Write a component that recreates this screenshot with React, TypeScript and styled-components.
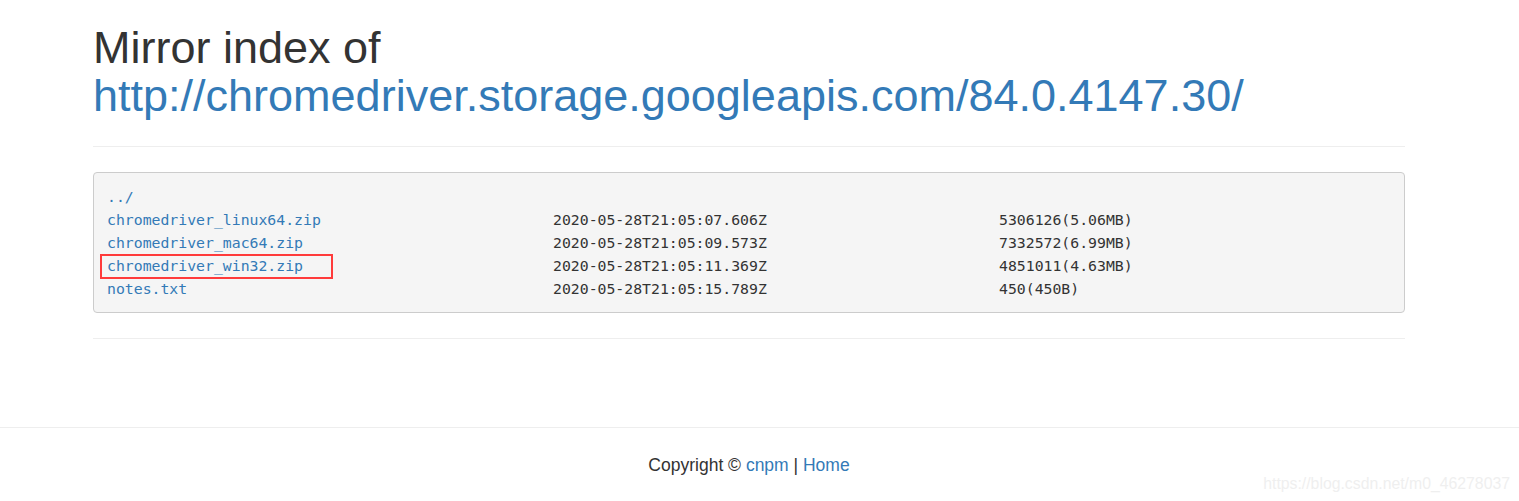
import React from "react";
import styled, { createGlobalStyle } from "styled-components";

const GlobalStyle = createGlobalStyle`
  html, body {
    margin: 0;
    padding: 0;
    background: #fff;
    color: #333;
    font-family: "Liberation Sans", Arial, sans-serif;
  }
  a {
    color: #337ab7;
    text-decoration: none;
  }
`;

const Page = styled.div`
  position: relative;
  min-height: 501px;
  overflow: hidden;
`;

const Container = styled.div`
  width: 1312px;
  margin-left: 93px;
`;

const PageHeader = styled.div`
  padding-bottom: 26px;
  border-bottom: 1px solid #eee;
`;

const Title = styled.h1`
  margin: 24px 0 0;
  font-size: 45px;
  line-height: 48px;
  font-weight: 400;
  color: #333;
`;

const Listing = styled.div`
  position: relative;
  margin: 25px 0;
  padding: 12px 13px;
  background: #f5f5f5;
  border: 1px solid #ccc;
  border-radius: 4px;
  font-family: "DejaVu Sans Mono", "Liberation Mono", monospace;
  font-size: 14.8px;
  line-height: 23px;
  color: #333;
`;

const Row = styled.div<{ $marked?: boolean }>`
  position: relative;
  display: grid;
  grid-template-columns: 446px 446px 1fr;
  height: 23px;
  white-space: pre;

  ${(p) =>
    p.$marked &&
    `
    &::after {
      content: "";
      position: absolute;
      left: -7px;
      top: 0;
      width: 229px;
      height: 21px;
      border: 2px solid #ff3b3b;
    }
  `}
`;

const Divider = styled.div`
  border-top: 1px solid #eee;
`;

const Footer = styled.footer`
  margin-top: 88px;
  border-top: 1px solid #eee;
  padding-top: 25px;
`;

const FooterText = styled.div`
  width: 1312px;
  margin-left: 93px;
  text-align: center;
  font-size: 17.5px;
  line-height: 25px;
  color: #333;
`;

const Watermark = styled.div`
  position: absolute;
  right: 9px;
  bottom: 7px;
  font-size: 15.8px;
  line-height: 20px;
  color: #efefef;
`;

const files = [
  { name: "chromedriver_linux64.zip", date: "2020-05-28T21:05:07.606Z", size: "5306126(5.06MB)" },
  { name: "chromedriver_mac64.zip", date: "2020-05-28T21:05:09.573Z", size: "7332572(6.99MB)" },
  { name: "chromedriver_win32.zip", date: "2020-05-28T21:05:11.369Z", size: "4851011(4.63MB)", marked: true },
  { name: "notes.txt", date: "2020-05-28T21:05:15.789Z", size: "450(450B)" },
];

const App = () => {
  return (
    <Page>
      <GlobalStyle />
      <Container>
        <PageHeader>
          <Title>
            Mirror index of
            <br />
            <a href="#">http://chromedriver.storage.googleapis.com/84.0.4147.30/</a>
          </Title>
        </PageHeader>
        <Listing>
          <Row>
            <a href="#">../</a>
          </Row>
          {files.map((f) => (
            <Row key={f.name} $marked={f.marked}>
              <a href="#">{f.name}</a>
              <span>{f.date}</span>
              <span>{f.size}</span>
            </Row>
          ))}
        </Listing>
        <Divider />
      </Container>
      <Footer>
        <FooterText>
          Copyright © <a href="#">cnpm</a> | <a href="#">Home</a>
        </FooterText>
      </Footer>
      <Watermark>https://blog.csdn.net/m0_46278037</Watermark>
    </Page>
  );
};

export default App;
